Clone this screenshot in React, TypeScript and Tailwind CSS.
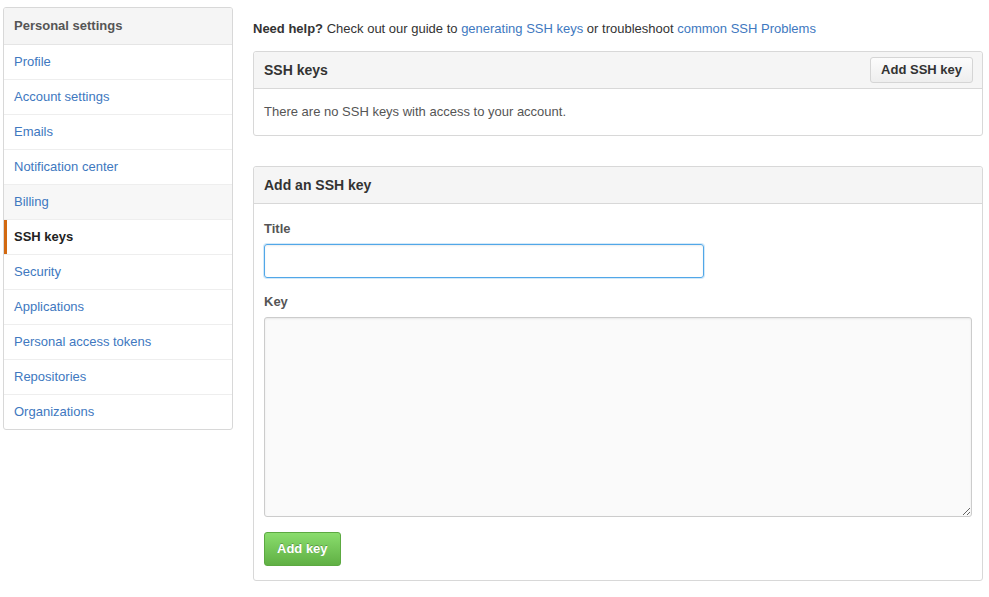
const navItems = [
  "Profile",
  "Account settings",
  "Emails",
  "Notification center",
  "Billing",
  "SSH keys",
  "Security",
  "Applications",
  "Personal access tokens",
  "Repositories",
  "Organizations",
];

function Sidebar() {
  return (
    <nav className="w-[230px] shrink-0 border border-[#d8d8d8] rounded-[3px] bg-white overflow-hidden">
      <div className="h-[37px] px-[10px] flex items-center bg-[#f5f5f5] border-b border-[#e5e5e5] font-bold text-[#555]">
        Personal settings
      </div>
      {navItems.map((item, i) => {
        const selected = item === "SSH keys";
        const hovered = item === "Billing";
        const last = i === navItems.length - 1;
        return (
          <div
            key={item}
            className={`relative px-[10px] flex items-center ${
              last ? "h-[34px]" : "h-[35px] border-b border-[#eeeeee]"
            } ${hovered ? "bg-[#f7f7f7]" : ""} ${
              selected ? "font-bold text-[#222]" : "text-[#4078c0]"
            }`}
          >
            {selected && (
              <span className="absolute left-0 top-0 bottom-0 w-[3px] bg-[#d26911]" />
            )}
            {item}
          </div>
        );
      })}
    </nav>
  );
}

function Box({
  title,
  action,
  children,
}: {
  title: string;
  action?: React.ReactNode;
  children: React.ReactNode;
}) {
  return (
    <div className="border border-[#d8d8d8] rounded-[3px] bg-white">
      <div className="h-[37px] px-[10px] flex items-center justify-between bg-[#f5f5f5] border-b border-[#d8d8d8] rounded-t-[3px]">
        <span className="font-bold text-[14px] text-[#333]">{title}</span>
        {action}
      </div>
      {children}
    </div>
  );
}

export default function App() {
  return (
    <div
      className="w-[989px] h-[597px] bg-white text-[13px] text-[#333] flex gap-[20px] pl-[3px] pt-[7px]"
      style={{ fontFamily: '"Liberation Sans", Arial, sans-serif' }}
    >
      <div>
        <Sidebar />
      </div>
      <main className="w-[730px] shrink-0 pt-[13px]">
        <p className="leading-[18px] mb-[13px]">
          <strong>Need help?</strong> Check out our guide to{" "}
          <a className="text-[#4078c0]">generating SSH keys</a> or troubleshoot{" "}
          <a className="text-[#4078c0]">common SSH Problems</a>
        </p>

        <Box
          title="SSH keys"
          action={
            <button className="h-[26px] px-[10px] -mr-[1px] text-[13px] font-bold text-[#333] border border-[#d5d5d5] rounded-[3px] bg-gradient-to-b from-[#fcfcfc] to-[#eeeeee]">
              Add SSH key
            </button>
          }
        >
          <div className="h-[46px] px-[10px] flex items-center text-[#555]">
            There are no SSH keys with access to your account.
          </div>
        </Box>

        <div className="h-[30px]" />

        <Box title="Add an SSH key">
          <div className="px-[10px] pt-[16px] pb-[14px]">
            <label className="block font-bold text-[#555] leading-[18px] mb-[6px]">Title</label>
            <input
              type="text"
              className="block w-[440px] h-[34px] px-[8px] rounded-[3px] border border-[#51a7e8] outline-none shadow-[0_0_0_1px_rgba(81,167,232,0.25),inset_0_1px_2px_rgba(0,0,0,0.075)]"
            />
            <label className="block font-bold text-[#555] leading-[18px] mt-[15px] mb-[6px]">Key</label>
            <textarea className="block w-[708px] h-[200px] px-[8px] py-[7px] rounded-[3px] border border-[#cccccc] bg-[#fafafa] outline-none shadow-[inset_0_1px_2px_rgba(0,0,0,0.075)]" />
            <button className="mt-[15px] h-[34px] px-[12px] text-[13px] font-bold text-white rounded-[3px] border border-[#5ca941] bg-gradient-to-b from-[#8add6d] to-[#60b044] [text-shadow:0_-1px_0_rgba(0,0,0,0.25)]">
              Add key
            </button>
          </div>
        </Box>
      </main>
    </div>
  );
}
